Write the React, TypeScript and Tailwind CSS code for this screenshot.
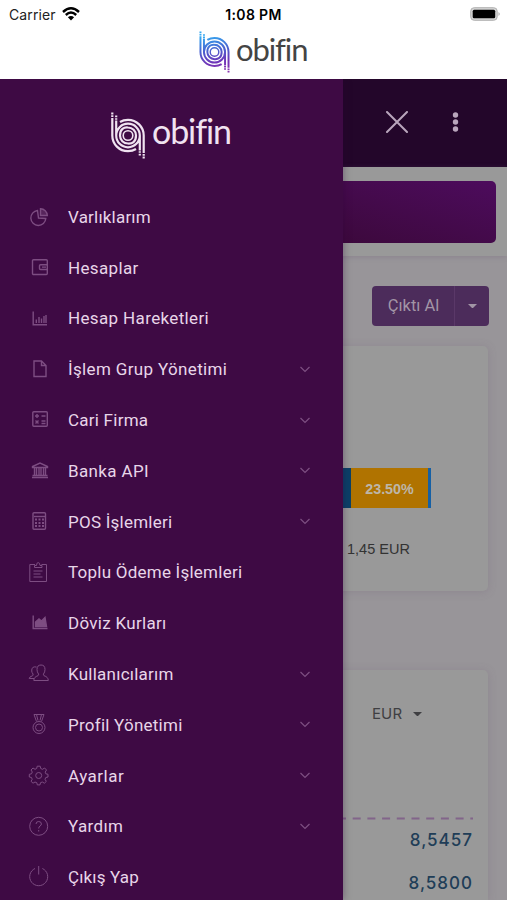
import React from 'react';

const Mark = ({ stroke, className }: { stroke: string; className: string }) => (
  <svg viewBox="0 0 34 47" className={className} fill="none" stroke={stroke} strokeWidth="2.2">
    <defs>
      <linearGradient id="markGradient" gradientUnits="userSpaceOnUse" x1="12" y1="0" x2="20" y2="47">
        <stop offset="0.1" stopColor="#35a8f0" />
        <stop offset="0.45" stopColor="#4a62d0" />
        <stop offset="0.75" stopColor="#7035b8" />
        <stop offset="1" stopColor="#8a35b0" />
      </linearGradient>
    </defs>
    <path d="M1.3 6V23.500A15.700 15.700 0 0 0 17 39.200Q21.500 39.200 25 37" />
    <path d="M32.700 41V23.500A15.700 15.700 0 0 0 17 7.800Q12.500 7.800 9 10" />
    <path d="M5.200 8.500V23.500A11.800 11.800 0 0 0 28.800 23.500A11.800 11.800 0 0 0 5.200 23.500M28.800 23.500V38.500" />
    <path d="M9 23.500C9 17 13 15 17 15.500A8 8 0 0 1 25 23.500C25 30 21 31.800 17 31.500A8 8 0 0 1 9 23.500" />
    <circle cx="17" cy="23.500" r="4.800" strokeWidth="1.600" />
    <path d="M1.300 0.500V2.500M1.300 3.300V5M5.200 3.500V5.200M5.200 6.200V7.700M32.700 42V43.700M32.700 44.500V46.500M28.800 39.300V40.800M28.800 41.800V43.500" />
  </svg>
);

const icons: Record<string, React.ReactNode> = {
  pie: (
    <>
      <path d="M9.500 4.500A7.500 7.500 0 1 0 17.800 12.500L10.500 12Z" />
      <path d="M12.500 9.500V2.700A7 7 0 0 1 19.300 9.500Z" fill="currentColor" fillOpacity="0.400" />
    </>
  ),
  wallet: (
    <>
      <rect x="4.500" y="2.700" width="14.800" height="14.800" rx="1" />
      <path d="M19 7.700H12.500Q11.500 7.700 11.500 8.700V11.500Q11.500 12.500 12.500 12.500H19M14 10.100H18" />
    </>
  ),
  bars: <path d="M5.200 3.500V16.800H19M8.300 15V11.500M11 15V9M13.500 15V10.500M16 15V8M18 15V7" />,
  file: <path d="M6 3H13.500L18 7.500V18.500H6ZM13.500 3V7.500H18" />,
  grid: (
    <>
      <rect x="4.800" y="2.700" width="14.500" height="14.500" rx="1" />
      <path d="M7 7H11M9 5V9M13.500 7H17.500M7.500 11.500L10.500 14.500M10.500 11.500L7.500 14.500M13.500 12H17.500M13.500 14.500H17.500" />
    </>
  ),
  bank: <path d="M4.500 7.500V6.500L12 3L19.500 6.500V7.500ZM6.500 8V15.500M8.500 8V15.500M11 8V15.500M13 8V15.500M15.500 8V15.500M17.500 8V15.500M4.500 15.500H19.500M4 17.500H20" />,
  calc: (
    <>
      <rect x="5" y="1.700" width="12.500" height="16.500" rx="1" />
      <path d="M6 5.500H17" />
      <path d="M7 8.500H16M7 12H16M7 15H16" strokeWidth="2" strokeDasharray="2 1.500" />
    </>
  ),
  clipboard: <path d="M7 2.500H1.800V19.500H18.500V2.500H13.500M6.500 5.500V3.500H8.500Q8.500 0.600 10.200 0.600T12 3.500H14V5.500ZM5.500 9H14.500M5.500 12H12.500M5.500 15H14.500" />,
  area: (
    <>
      <path d="M5.200 3.500V16.500H19.500" />
      <path d="M7.500 14.500V10L11 7L13.500 9L17 5.500L18.500 14.500Z" fill="currentColor" />
    </>
  ),
  users: (
    <>
      <path d="M5.800 17.500H20.300Q20.300 14 16 12.700Q15 12 15.500 11Q17 9 17 6.500Q17 2 13 2T9 6.500Q9 9 10.500 11Q11 12 10 12.700Q5.800 14 5.800 17.500Z" />
      <path d="M8.500 4Q3.500 3 3.700 8Q3.800 9.500 5 11Q5.300 12.300 4.500 12.800Q1.200 13.800 1.200 15.500H6" />
    </>
  ),
  medal: (
    <>
      <circle cx="11" cy="13.500" r="6" />
      <circle cx="11" cy="13.500" r="3.500" />
      <path d="M6 0.500L8.500 7.500M6 0.500H16L13.500 7.500M8.500 0.500L10 6.500M13.500 0.500L12 6.500" />
    </>
  ),
  gear: (
    <>
      <path d="M9.200 1.200H12.200L12.700 3.500L14.500 4.300L16.600 3L18.500 5L17.200 7.100L17.800 8.800L20 9.300V12L17.800 12.500L17 14.300L18.300 16.400L16.400 18.200L14.300 17L12.500 17.700L12 19.900H9.300L8.800 17.700L7 17L5 18.200L3 16.300L4.200 14.300L3.500 12.500L1.300 12V9.300L3.500 8.800L4.300 7L3 5L5 3L7 4.300L8.700 3.500Z" strokeLinejoin="round" />
      <circle cx="10.700" cy="10.500" r="3" />
    </>
  ),
  help: (
    <>
      <circle cx="10.700" cy="10.300" r="9" />
      <path d="M8 8Q8 5.500 10.700 5.500T13.400 8Q13.400 9.300 12 10Q10.700 10.800 10.700 12.500M10.700 14V15.500" />
    </>
  ),
  power: <path d="M7 2.500A9 9 0 1 0 14.400 2.500M10.700 0V8.500" />,
};

const menu = [
  { icon: 'pie', label: 'Varlıklarım', tracking: 'tracking-[0.2px]' },
  { icon: 'wallet', label: 'Hesaplar', tracking: 'tracking-[0.36px]' },
  { icon: 'bars', label: 'Hesap Hareketleri', tracking: 'tracking-[0.36px]' },
  { icon: 'file', label: 'İşlem Grup Yönetimi', tracking: 'tracking-[0.35px]', open: true },
  { icon: 'grid', label: 'Cari Firma', tracking: 'tracking-[0.24px]', open: true },
  { icon: 'bank', label: 'Banka API', tracking: 'tracking-[0.36px]', open: true },
  { icon: 'calc', label: 'POS İşlemleri', tracking: 'tracking-[0.24px]', open: true },
  { icon: 'clipboard', label: 'Toplu Ödeme İşlemleri', tracking: 'tracking-[0.24px]' },
  { icon: 'area', label: 'Döviz Kurları', tracking: 'tracking-[0.3px]' },
  { icon: 'users', label: 'Kullanıcılarım', tracking: 'tracking-[0.24px]', open: true },
  { icon: 'medal', label: 'Profil Yönetimi', tracking: 'tracking-[0.24px]', open: true },
  { icon: 'gear', label: 'Ayarlar', tracking: 'tracking-[0.5px]', open: true },
  { icon: 'help', label: 'Yardım', tracking: 'tracking-[0.36px]', open: true },
  { icon: 'power', label: 'Çıkış Yap', tracking: 'tracking-[0.15px]' },
];

// icons drawn with a hairline instead of the regular outline
const thin = ['clipboard', 'users', 'medal', 'gear', 'help', 'power'];

const Caret = ({ className }: { className: string }) => (
  <svg viewBox="0 0 10 5" className={className} fill="currentColor">
    <path d="M0 0H10L5 5Z" />
  </svg>
);

const TopBar = () => (
  <header className="h-[79px] bg-white">
    <div className="grid h-7 grid-cols-3 items-center px-[9px] font-['Inter'] text-[14px] text-[#222]">
      <div className="flex items-center gap-[6px]">
        <span className="tracking-[0.1px]">Carrier</span>
        <svg viewBox="0 0 18 14" className="h-[14px] w-[18px]" fill="none" stroke="#000" strokeWidth="2.4">
          <path d="M1 5Q9-2.400 17 5M3.800 8Q9 3.200 14.200 8" />
          <path d="M9 13.500L5.900 10.300Q9 7.700 12.100 10.300Z" fill="#000" stroke="none" />
        </svg>
      </div>
      <div className="text-center text-[14px] font-semibold tracking-[0.35px] whitespace-nowrap text-black">1:08 PM</div>
      <svg viewBox="0 0 31 14" className="h-[14px] w-[31px] translate-x-[3px] justify-self-end">
        <rect x="0.7" y="0.700" width="26.500" height="12.600" rx="3.500" fill="#d4d4d4" stroke="#b0b0b0" />
        <rect x="2.7" y="2.700" width="22.500" height="8.600" rx="1.500" fill="#000" />
        <path d="M28.500 5Q31 7 28.500 9Z" fill="#aaa" />
      </svg>
    </div>
    <div className="flex h-[48px] items-center pl-[199px]">
      <Mark stroke="url(#markGradient)" className="h-[42px] w-[31px]" />
      <span className="ml-[6px] pb-[6px] font-['Lato'] text-[31px] leading-none tracking-[-1.1px] text-[#444] [font-variant-ligatures:none]">obifin</span>
    </div>
  </header>
);

const Sidebar = () => (
  <aside className="absolute inset-y-0 left-0 w-[343px] bg-[#3e0a44] shadow-[0_0_8px_rgba(40,0,50,0.4)]">
    <div className="flex h-[112.6px] items-center pl-[111px]">
      <Mark stroke="#f0e3f1" className="h-[47px] w-[34px]" />
      <span className="ml-[7px] pb-[8px] font-['Lato'] text-[34px] leading-none tracking-[-1.1px] text-[#f0e3f1] [font-variant-ligatures:none]">obifin</span>
    </div>
    <nav>
      {menu.map((item) => (
        <a key={item.label} className="flex h-[50.8px] items-center pr-[33px] pl-[28px]">
          <svg
            viewBox="0 0 22 22"
            className="mr-[18px] size-[22px] shrink-0 text-[#7d4d82]"
            fill="none"
            stroke="currentColor"
            strokeWidth={thin.includes(item.icon) ? 1 : 1.4}
          >
            {icons[item.icon]}
          </svg>
          <span className={`flex-1 pt-[1px] font-['Roboto'] text-[17px] whitespace-nowrap text-[#e8d6e9] ${item.tracking}`}>{item.label}</span>
          {item.open && (
            <svg viewBox="0 0 10 7" className="h-[7px] w-[10px] text-[#7d4f82]" fill="none" stroke="currentColor" strokeWidth="1.2">
              <path d="M0.500 1L5 5.500L9.500 1" />
            </svg>
          )}
        </a>
      ))}
    </nav>
  </aside>
);

const Dashboard = () => (
  <main className="flex h-full flex-col bg-[#989599]">
    <div className="flex h-[88px] shrink-0 items-center justify-end gap-[42px] bg-[#23062a] pr-[46px] pb-[2px] text-[#b9a6bc]">
      <svg viewBox="0 0 22 22" className="size-[22px]" fill="none" stroke="currentColor" strokeWidth="2" strokeLinecap="round">
        <path d="M1 1L21 21M21 1L1 21" />
      </svg>
      <svg viewBox="0 0 10 20" className="h-[20px] w-[11px]" fill="currentColor">
        <circle cx="5" cy="3" r="2.7" />
        <circle cx="5" cy="10" r="2.7" />
        <circle cx="5" cy="17" r="2.7" />
      </svg>
    </div>
    <div className="h-[89px] shrink-0 bg-[#999] pt-[14px] pr-[11px] shadow-[0_1px_5px_rgba(110,90,115,0.3)]">
      <div className="ml-auto h-[62px] w-[200px] rounded-[5px] bg-linear-to-tr from-[#3a0838] to-[#4d0b5d]" />
    </div>
    <div className="mt-[30px] mr-[18px] flex h-[40px] w-[117px] shrink-0 self-end rounded-[4px] bg-[#4c2c5b] text-[#a295a6]">
      <div className="flex w-[83px] items-center justify-center border-r border-[#5a3868] pl-[1px] font-['Roboto'] text-[16.5px]">Çıktı Al</div>
      <div className="flex flex-1 items-center justify-center">
        <Caret className="h-[4.5px] w-[9px]" />
      </div>
    </div>
    <section className="mt-[20px] mr-[19px] h-[245px] shrink-0 rounded-[5px] bg-[#999] pl-[343px] shadow-[0_1px_8px_rgba(110,90,115,0.25)]">
      <div className="flex h-[162px] items-end">
        <div className="h-[40px] w-[8px] bg-[#0b4068]" />
        <div className="flex h-[40px] w-[77px] items-center justify-center bg-[#b07300] pt-[3px] font-['Liberation_Sans'] text-[14.3px] font-bold text-[#bdb6a8]">23.50%</div>
        <div className="h-[40px] w-[3px] bg-[#1560a5]" />
      </div>
      <div className="mt-[31px] pl-[4px] font-['Liberation_Sans'] text-[14.5px] text-[#333]">1,45 EUR</div>
    </section>
    <section className="mt-[79px] mr-[19px] flex-1 rounded-t-[5px] bg-[#999] pt-[32px] pr-[15px] pl-[343px] shadow-[0_1px_8px_rgba(110,90,115,0.25)]">
      <div className="flex h-[24px] items-center gap-[11px] pl-[29px] font-['Inter'] text-[15px] tracking-[0.1px] text-[#3f3f42]">
        <span>EUR</span>
        <Caret className="h-[4.5px] w-[9px]" />
      </div>
      <svg viewBox="0 0 130 3" className="mt-[91px] h-[3px] w-[130px]">
        <path d="M-5 1.500H130" stroke="#82658a" strokeWidth="2" strokeDasharray="8 6.7" />
      </svg>
      <div className="mt-[7px] text-right font-['Inter'] text-[17px] font-medium tracking-[1px] text-[#203d57]">
        <div className="flex h-[28px] items-center justify-end">8,5457</div>
        <div className="mt-[15px] flex h-[28px] items-center justify-end">8,5800</div>
      </div>
    </section>
  </main>
);

export default function App() {
  return (
    <div className="flex h-screen w-full flex-col overflow-hidden bg-white">
      <TopBar />
      <div className="relative min-h-0 flex-1 overflow-hidden">
        <Dashboard />
        <Sidebar />
      </div>
    </div>
  );
}
